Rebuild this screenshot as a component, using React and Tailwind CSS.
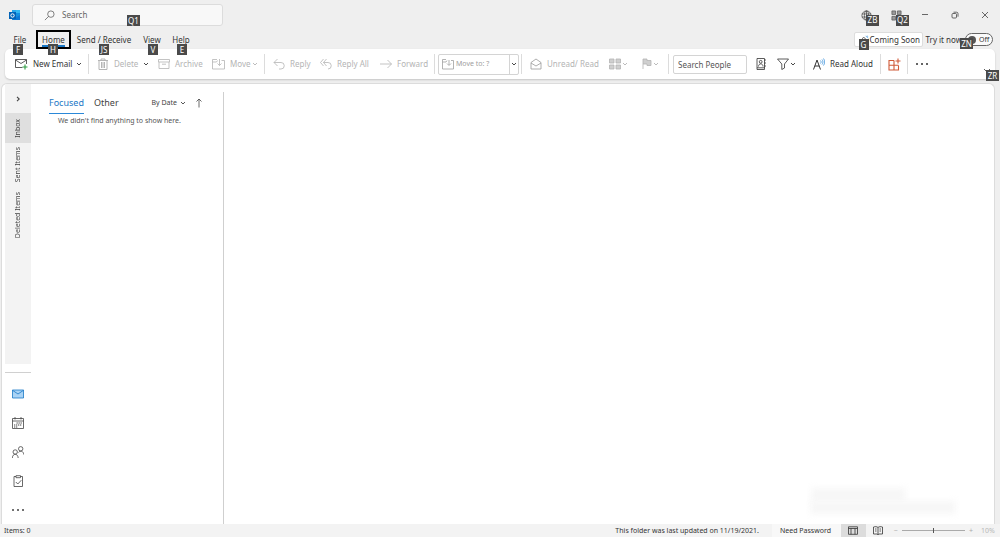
import React from "react";

function Svg({ className = "", box = "0 0 12 12", children }) {
  return (
    <svg
      viewBox={box}
      className={`shrink-0 ${className}`}
      fill="none"
      stroke="currentColor"
      strokeWidth="0.8"
      aria-hidden="true"
    >
      {children}
    </svg>
  );
}

function Chevron({ className = "" }) {
  return (
    <Svg box="0 0 6 6" className={`h-[6px] w-[6px] ${className}`}>
      <path d="M1 2l2 2 2-2" strokeWidth="0.9" />
    </Svg>
  );
}

function KeyTip({ className, children }) {
  return (
    <span
      className={`absolute z-10 flex h-[11px] items-center justify-center bg-[#4a4a4a] text-[8px] leading-none text-white ${className}`}
    >
      {children}
    </span>
  );
}

function Divider({ className = "" }) {
  return <div className={`h-[20px] w-px shrink-0 bg-[#dcdcdc] ${className}`} />;
}

function Tool({ className = "", icon, label, title, menu, disabled }) {
  return (
    <button
      type="button"
      aria-label={title}
      disabled={disabled}
      className={`flex h-[22px] shrink-0 items-center whitespace-nowrap text-left ${
        disabled ? "text-[#b4b4b4]" : "text-[#333]"
      } ${className}`}
    >
      {icon}
      {label && <span className="ml-[5px]">{label}</span>}
      {menu}
    </button>
  );
}

const tabs = [
  { name: "File", tip: "F", tab: "w-[24px] mr-[4px]", tipAt: "left-[5px] w-[10px]" },
  { name: "Home", tip: "H", tab: "w-[35px] mr-[2px]", tipAt: "left-[10px] w-[10px]", active: true },
  { name: "Send / Receive", tip: "JS", tab: "w-[62px] mr-[3px]", tipAt: "left-[26px] w-[10px]" },
  { name: "View", tip: "V", tab: "w-[28px] mr-[2px]", tipAt: "left-[10px] w-[10px]" },
  { name: "Help", tip: "E", tab: "w-[26px]", tipAt: "left-[9px] w-[10px]" },
];

function TitleBar() {
  return (
    <header className="flex h-[30px] shrink-0 items-center">
      <svg viewBox="0 0 12 12" className="ml-[9px] h-[12px] w-[12px]" aria-label="Outlook">
        <path d="M3 1h8v4H3z" fill="#28a8ea" />
        <path d="M7 1h4v4H7z" fill="#35b8f1" />
        <path d="M3 4h8v7H3z" fill="#1490df" />
        <path d="M3 11l8-5v5z" fill="#0f78d4" />
        <path d="M0 3h7v7H0z" fill="#0364b8" />
        <circle cx="3.500" cy="6.500" r="1.700" fill="none" stroke="#fff" strokeWidth="1" />
      </svg>
      <label className="relative ml-[11px] flex h-[22px] w-[191px] items-center rounded-[3px] border border-[#dcdcdc] bg-[#f8f8f8]">
        <Svg className="ml-[11px] h-[11px] w-[11px] text-[#555]">
          <circle cx="7.500" cy="4.500" r="3.500" />
          <path d="M5 7L1 11" />
        </Svg>
        <input
          type="text"
          aria-label="Search"
          placeholder="Search"
          className="ml-[7px] min-w-0 flex-1 bg-transparent text-[8px] leading-[12px] outline-none placeholder:text-[#666]"
        />
        <KeyTip className="left-[94px] top-[10px] w-[13px]">Q1</KeyTip>
      </label>
      <div className="ml-auto flex items-center text-[#444]">
        <button type="button" aria-label="Language" className="relative mr-[19px] h-[11px] w-[11px]">
          <Svg className="h-[11px] w-[11px]">
            <circle cx="6" cy="6" r="5" />
            <ellipse cx="6" cy="6" rx="2.300" ry="5" />
            <path d="M1 4.300h10M1 7.700h10M6 1v10" />
          </Svg>
          <KeyTip className="left-[5px] top-[5px] w-[13px]">ZB</KeyTip>
        </button>
        <button type="button" aria-label="Ribbon display" className="relative mr-[19px] h-[11px] w-[11px]">
          <Svg className="h-[11px] w-[11px] text-[#555]">
            <path d="M1 1h4v4H1zM7 1h4v4H7zM1 7h4v4H1zM7 7h4v4H7z" fill="#999" />
          </Svg>
          <KeyTip className="left-[5px] top-[5px] w-[13px]">Q2</KeyTip>
        </button>
        <button type="button" aria-label="Minimize" className="mr-[22px]">
          <Svg box="0 0 8 8" className="h-[8px] w-[8px]">
            <path d="M1 3.500h6" />
          </Svg>
        </button>
        <button type="button" aria-label="Restore" className="mr-[22px]">
          <Svg box="0 0 8 8" className="h-[8px] w-[8px]">
            <rect x="1" y="2.500" width="4.500" height="4.500" rx="1" />
            <path d="M2.500 1.200h3a1.500 1.500 0 0 1 1.500 1.500v3" />
          </Svg>
        </button>
        <button type="button" aria-label="Close" className="mr-[11px]">
          <Svg box="0 0 8 8" className="h-[8px] w-[8px]">
            <path d="M1 1l6 6M7 1L1 7" />
          </Svg>
        </button>
      </div>
    </header>
  );
}

function TabRow() {
  return (
    <div className="flex h-[19px] shrink-0 items-center text-[8px] text-[#333]">
      <nav className="ml-[8px] flex items-center">
        {tabs.map((t) => (
          <button
            key={t.name}
            type="button"
            className={`relative flex h-[19px] items-center justify-center whitespace-nowrap ${t.tab} ${
              t.active ? "border-2 border-black" : ""
            }`}
          >
            {t.name}
            {t.active && <span className="absolute inset-x-[4px] bottom-0 h-[2px] bg-[#1a78c6]" />}
            <KeyTip className={`${t.active ? "top-[12px]" : "top-[14px]"} ${t.tipAt}`}>{t.tip}</KeyTip>
          </button>
        ))}
      </nav>
      <div className="ml-auto mr-[7px] flex items-center">
        <button
          type="button"
          className="relative flex h-[15px] w-[69px] items-center whitespace-nowrap rounded-[2px] border border-[#ddd] bg-white pl-[4px]"
        >
          <Svg className="mr-[1px] h-[10px] w-[10px]">
            <path d="M1 9h9L7 3.500 5 3zM5 10.500h2" />
            <path d="M8 1l3 3M9.500 1l1.500 1" stroke="#2b88d8" />
          </Svg>
          Coming Soon
          <KeyTip className="left-[4px] top-[6px] w-[10px]">G</KeyTip>
        </button>
        <label className="relative ml-[3px] flex items-center whitespace-nowrap">
          Try it now
          <input type="checkbox" role="switch" className="sr-only" />
          <span className="ml-[3px] flex h-[13px] w-[28px] items-center rounded-full border border-[#666] bg-[#fafafa] text-[7px] leading-none">
            <span className="ml-[2px] mr-[3px] h-[8px] w-[8px] shrink-0 rounded-full bg-[#555]" />
            Off
          </span>
          <KeyTip className="right-[20px] top-[5px] w-[13px]">ZN</KeyTip>
        </label>
      </div>
    </div>
  );
}

function Ribbon() {
  return (
    <div className="relative mx-[5px] flex h-[30px] shrink-0 items-center rounded-[5px] bg-white pl-[10px] text-[8px] text-[#333] shadow-[0_1px_2px_rgba(0,0,0,0.18)]">
      <Tool
        className="w-[73px]"
        label="New Email"
        icon={
          <Svg box="0 0 13 12" className="h-[12px] w-[13px]">
            <path d="M7.500 9.500H.5v-8h11v4.500M.5 2l5.500 3.500L11.500 2" />
            <path d="M10 6.500v5M7.500 9h5" stroke="#2f9e44" strokeWidth="1.100" />
          </Svg>
        }
        menu={<Chevron className="ml-auto mr-[6px]" />}
      />
      <Divider className="mr-[8px]" />
      <Tool
        className="w-[61px]"
        label="Delete"
        disabled
        icon={
          <Svg className="h-[12px] w-[12px]">
            <path d="M1 2.500h10M4 2.500V1h4v1.500M2 2.500v9h8v-9M4.500 4v6M6 4v6M7.500 4v6" strokeWidth="1" />
          </Svg>
        }
        menu={<Chevron className="ml-auto mr-[9px] text-[#333]" />}
      />
      <Tool
        className="w-[54px]"
        label="Archive"
        disabled
        icon={
          <Svg className="h-[12px] w-[12px]">
            <path d="M.5 1.500h11v2.500H.5zM1 4v6.500h10V4M4 6.200h4" />
          </Svg>
        }
      />
      <Tool
        className="w-[52px]"
        label="Move"
        disabled
        icon={
          <Svg box="0 0 13 12" className="h-[12px] w-[13px]">
            <path d="M5 1.500H.5V11h12V2.500H9.500M.5 4h4l1-1.500M7.500 1v6.500M5.500 5.500l2 2 2-2" />
          </Svg>
        }
        menu={<Chevron className="ml-auto mr-[6px]" />}
      />
      <Divider className="mr-[8px]" />
      <Tool
        className="w-[47px]"
        label="Reply"
        disabled
        icon={
          <Svg className="h-[12px] w-[12px]">
            <path d="M4.500 1L1 4.500 4.500 8M1 4.500h7a3.200 3.200 0 0 1 0 6.500H6" />
          </Svg>
        }
      />
      <Tool
        className="w-[60px]"
        label="Reply All"
        disabled
        icon={
          <Svg className="h-[12px] w-[12px]">
            <path d="M3.500 1L.5 4.500l3 3.500M6.500 1l-3 3.500 3 3.500M3.500 4.500H8a3.200 3.200 0 0 1 0 6.500" />
          </Svg>
        }
      />
      <Tool
        className="w-[54px]"
        label="Forward"
        disabled
        icon={
          <Svg className="h-[12px] w-[12px]">
            <path d="M0 6h11.500M7.500 2l4 4-4 4" />
          </Svg>
        }
      />
      <Divider className="mr-[3px]" />
      <label className="mr-[2px] flex h-[21px] w-[81px] shrink-0 items-center rounded-[2px] border border-[#d4d4d4] text-[#a0a0a0]">
        <Svg className="ml-[3px] h-[12px] w-[12px]">
          <path d="M4 1.500H.5V11h11V2.500H9M.5 4H4l1-1.500M7 2v5M5 5.500l2 2 2-2" />
        </Svg>
        <select
          aria-label="Move to"
          disabled
          className="ml-[2px] min-w-0 flex-1 appearance-none bg-transparent text-[7px]"
        >
          <option>Move to: ?</option>
        </select>
        <span className="flex h-full w-[9px] items-center justify-center border-l border-[#d4d4d4] text-[#333]">
          <Chevron />
        </span>
      </label>
      <Divider className="mr-[8px]" />
      <Tool
        className="w-[79px]"
        label="Unread/ Read"
        disabled
        icon={
          <Svg className="h-[12px] w-[12px] text-[#999]">
            <path d="M1 4.500L6 1l5 3.500V11H1zM1 5l5 3 5-3" />
          </Svg>
        }
      />
      <Tool
        className="w-[33px]"
        title="Categorize"
        disabled
        icon={
          <Svg className="h-[12px] w-[12px]">
            <path d="M.5 1h4.500v4H.5zM7 1h4.500v4H7zM.5 7h4.500v4H.5zM7 7h4.500v4H7z" fill="#cfcfcf" />
          </Svg>
        }
        menu={<Chevron className="ml-[1px]" />}
      />
      <Tool
        className="w-[26px]"
        title="Follow up"
        disabled
        icon={
          <Svg box="0 0 10 12" className="h-[12px] w-[10px]">
            <path d="M1 11V1h4v1.500h4v5H5V6H1" fill="#cfcfcf" />
          </Svg>
        }
        menu={<Chevron className="ml-[1px]" />}
      />
      <Divider className="mr-[4px]" />
      <input
        type="text"
        aria-label="Search People"
        placeholder="Search People"
        className="mr-[9px] h-[19px] w-[74px] shrink-0 rounded-[2px] border border-[#d4d4d4] px-[4px] text-[8px] leading-[12px] outline-none placeholder:text-[#555]"
      />
      <Tool
        className="w-[21px]"
        title="Address book"
        icon={
          <Svg box="0 0 10 12" className="h-[12px] w-[10px]">
            <path d="M1 .5h7.500v11H1zM8.500 2H10M8.500 5H10M8.500 8H10M1 9.800h7.500" />
            <circle cx="4.700" cy="3.800" r="1.400" />
            <path d="M2.500 8.500c0-3.500 4.500-3.500 4.500 0" />
          </Svg>
        }
      />
      <Tool
        className="w-[27px]"
        title="Filter email"
        icon={
          <Svg className="h-[12px] w-[12px]">
            <path d="M.5 1h11L7.500 6v4L4.800 11.500V6z" />
          </Svg>
        }
        menu={<Chevron className="ml-[1px]" />}
      />
      <Divider className="mr-[8px]" />
      <Tool
        className="w-[67px]"
        label="Read Aloud"
        icon={
          <Svg className="h-[12px] w-[12px]">
            <path d="M.5 11.500L4 2l3.500 9.500M1.800 8h4.400" strokeWidth="1" />
            <path
              d="M7.500 2.500c.8 1 .8 2 0 3M9 1.500c1.300 1.600 1.300 3.400 0 5M10.500.5c1.600 2.300 1.600 4.700 0 7"
              stroke="#2b88d8"
              strokeWidth="0.700"
            />
          </Svg>
        }
      />
      <Divider className="mr-[7px]" />
      <Tool
        className="w-[19px]"
        title="Get add-ins"
        icon={
          <Svg box="0 0 13 13" className="h-[13px] w-[13px] text-[#d05a38]">
            <path d="M6 2.500H1v9.500h9.500V7.500M1 7.300h9.500M6 2.500V12M10 .5v5M7.500 3h5" strokeWidth="1.100" />
          </Svg>
        }
      />
      <Divider className="mr-[8px]" />
      <Tool
        title="More commands"
        icon={
          <Svg box="0 0 12 4" className="h-[4px] w-[12px]">
            <path d="M1 2h.01M6 2h.01M11 2h.01" strokeWidth="2" strokeLinecap="round" />
          </Svg>
        }
      />
      <button type="button" aria-label="Ribbon options" className="absolute right-[4px] top-[18px] h-[8px] w-[8px]">
        <Svg box="0 0 8 8" className="h-[8px] w-[8px]">
          <path d="M1 2l3 3 3-3" />
        </Svg>
        <KeyTip className="left-[3px] top-[3px] w-[13px]">ZR</KeyTip>
      </button>
    </div>
  );
}

function Folder({ className, children }) {
  return (
    <button type="button" className={`flex items-center justify-center ${className}`}>
      <span className="rotate-180 whitespace-nowrap [writing-mode:vertical-rl]">{children}</span>
    </button>
  );
}

function NavIcon({ title, children }) {
  return (
    <button type="button" aria-label={title} className="flex h-[29px] items-center justify-center">
      <Svg className="h-[12px] w-[12px]">{children}</Svg>
    </button>
  );
}

function SideBar() {
  return (
    <aside className="ml-[3px] flex w-[26px] shrink-0 flex-col">
      <div className="flex flex-1 flex-col bg-[#f3f3f3] text-[7px] text-[#444]">
        <button type="button" aria-label="Expand folder pane" className="flex h-[29px] items-center justify-center">
          <Svg box="0 0 6 6" className="h-[6px] w-[6px]">
            <path d="M2 .8L4.200 3 2 5.200" strokeWidth="1.100" />
          </Svg>
        </button>
        <Folder className="h-[30px] bg-[#dfdfdf]">Inbox</Folder>
        <Folder className="h-[44px]">Sent Items</Folder>
        <Folder className="h-[56px]">Deleted Items</Folder>
      </div>
      <div className="mt-[8px] flex flex-col border-t border-[#d0d0d0] pt-[6px] text-[#444]">
        <NavIcon title="Mail">
          <path d="M.5 2h11v8H.5z" fill="#a9d3f5" stroke="#1a78c6" />
          <path d="M.5 2.300L6 6l5.500-3.700" stroke="#1a78c6" />
        </NavIcon>
        <NavIcon title="Calendar">
          <path d="M.5 1.500h11v10H.5zM.5 4h11M3 0v2.500M9 0v2.500" />
          <path d="M4.500 6h5.500M2 8h7.500M2 10h4" strokeDasharray="1.300 0.700" strokeWidth="1.100" />
        </NavIcon>
        <NavIcon title="People">
          <circle cx="8.700" cy="2.800" r="2.200" />
          <circle cx="3.200" cy="6" r="2.200" />
          <path d="M.3 12c.3-5 5.500-5 5.900 0M6.500 6.500c1.500-2.200 5-1.700 5.200 2" />
        </NavIcon>
        <NavIcon title="Tasks">
          <path d="M4 1.500H2v10h8.500v-10h-2M4 .7h4.500v2H4zM3.800 7l2 2 3.500-3.800" />
        </NavIcon>
        <NavIcon title="More">
          <path d="M1 6h.01M6 6h.01M11 6h.01" strokeWidth="2" strokeLinecap="round" />
        </NavIcon>
      </div>
    </aside>
  );
}

function MessageList() {
  return (
    <section className="mt-[8px] w-[193px] shrink-0 border-r border-[#cfcfcf] pl-[18px] text-[#444]">
      <div className="flex h-[22px] items-center">
        <button
          type="button"
          className="h-[22px] w-[35px] border-b border-[#2b88d8] text-left text-[9px] text-[#1a78c6]"
        >
          Focused
        </button>
        <button type="button" className="ml-[10px] h-[22px] w-[26px] border-b border-transparent text-left text-[9px]">
          Other
        </button>
        <button type="button" className="ml-auto flex items-center whitespace-nowrap text-[7px]">
          By Date
          <Chevron className="ml-[3px]" />
        </button>
        <button type="button" aria-label="Sort order" className="ml-[9px] mr-[20px]">
          <Svg box="0 0 8 10" className="h-[10px] w-[8px]">
            <path d="M4 9.500V1M1.500 3.500L4 1l2.500 2.500" />
          </Svg>
        </button>
      </div>
      <p className="ml-[9px] mt-[1px] whitespace-nowrap text-[7px] leading-[12px] text-[#555]">
        We didn't find anything to show here.
      </p>
    </section>
  );
}

function StatusBar() {
  return (
    <footer className="flex h-[13px] shrink-0 items-center bg-[#f3f3f3] text-[7px] leading-[13px] text-[#333]">
      <span className="ml-[4px]">Items: 0</span>
      <span className="ml-auto whitespace-nowrap">This folder was last updated on 11/19/2021.</span>
      <span className="ml-[13px] flex h-full w-[69px] items-center whitespace-nowrap bg-[#f8f8f8] pl-[8px]">
        Need Password
      </span>
      <button
        type="button"
        aria-label="Normal view"
        className="flex h-full w-[25px] items-center justify-center bg-[#dcdcdc]"
      >
        <Svg box="0 0 10 9" className="h-[9px] w-[10px]">
          <path d="M.5.8h9v7.500h-9zM.5 2.500h9M3 2.500v5.800M7 2.500v5.800" />
        </Svg>
      </button>
      <button type="button" aria-label="Reading view" className="flex h-full w-[25px] items-center justify-center">
        <Svg box="0 0 10 9" className="h-[9px] w-[10px]">
          <path d="M5 1.500C4 .5 2 .5.5 1v7h3.500l1 .7L6 8h3.500V1C8 .5 6 .5 5 1.500zM5 1.500v7M2 3h1.500M2 5h1.500M6.500 3H8M6.500 5H8" />
        </Svg>
      </button>
      <span className="ml-[3px] text-[#aaa]">−</span>
      <input
        type="range"
        aria-label="Zoom"
        min="10"
        max="190"
        defaultValue="100"
        className="mx-[4px] h-[5px] w-[63px] appearance-none bg-[linear-gradient(#aaa,#aaa)] bg-[length:100%_1px] bg-center bg-no-repeat [&::-webkit-slider-thumb]:h-[5px] [&::-webkit-slider-thumb]:w-px [&::-webkit-slider-thumb]:appearance-none [&::-webkit-slider-thumb]:bg-[#555]"
      />
      <span className="text-[#aaa]">+</span>
      <span className="ml-[8px] mr-[6px] w-[13px] text-[#b8b8b8]">10%</span>
    </footer>
  );
}

export default function App() {
  return (
    <div className="flex min-h-screen flex-col bg-[#efefef] font-['Noto_Sans',sans-serif]">
      <TitleBar />
      <TabRow />
      <Ribbon />
      <main className="relative ml-[1px] mr-[5px] mt-[4px] flex flex-1 rounded-t-[6px] border border-b-0 border-[#dcdcdc] bg-white">
        <SideBar />
        <MessageList />
        <div className="flex-1" />
        <div className="absolute bottom-[22px] right-[88px] h-[14px] w-[95px] bg-[#f7f7f7] blur-[3px]" />
        <div className="absolute bottom-[10px] right-[38px] h-[13px] w-[146px] bg-[#f7f7f7] blur-[3px]" />
      </main>
      <StatusBar />
    </div>
  );
}
